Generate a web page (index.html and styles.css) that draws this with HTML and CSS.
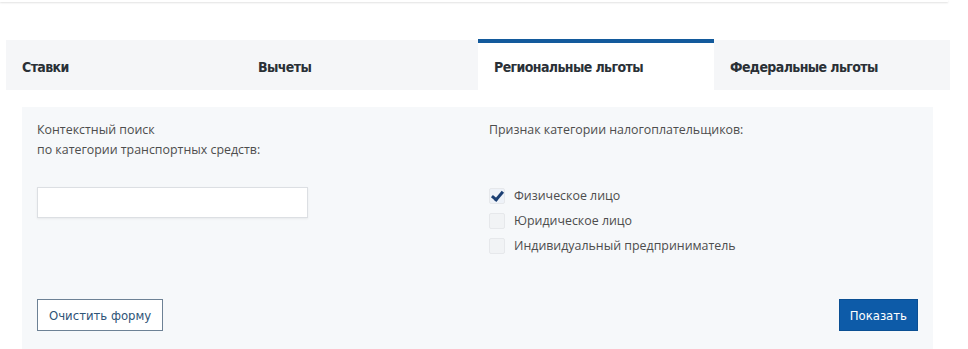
FILE: index.html
```html
<!DOCTYPE html>
<html>
<head>
    <title>Транспортный налог</title>
    <meta name="viewport" content="width=device-width, initial-scale=1.0">
    <link rel="stylesheet" href="styles.css">
</head>
<body>
<div class="top-strip"></div>
<main class="calc">
    <nav class="tabs">
        <a class="tab">Ставки</a>
        <a class="tab">Вычеты</a>
        <a class="tab tab-active">Региональные льготы</a>
        <a class="tab">Федеральные льготы</a>
    </nav>
    <section class="panel">
        <form class="filter">
            <div class="filter-col">
                <label class="filter-label" for="search">Контекстный поиск<br>по категории транспортных средств:</label>
                <input type="text" class="filter-input" id="search">
            </div>
            <div class="filter-col">
                <div class="filter-label">Признак категории налогоплательщиков:</div>
                <ul class="checks">
                    <li class="check check-on"><span class="check-box"></span>Физическое лицо</li>
                    <li class="check"><span class="check-box"></span>Юридическое лицо</li>
                    <li class="check"><span class="check-box"></span>Индивидуальный предприниматель</li>
                </ul>
            </div>
            <div class="filter-actions">
                <button type="button" class="btn btn-outline">Очистить форму</button>
                <button type="button" class="btn btn-primary">Показать</button>
            </div>
        </form>
    </section>
</main>
</body>
</html>
```

FILE: styles.css
```css
body {
    margin: 0;
    background-color: #fff;
    font-family: "Open Sans", sans-serif;
    font-size: 12.4px;
    color: #4d4d4d;
    overflow: hidden;
}

.top-strip {
    width: 948px;
    height: 2px;
    background: #fff;
    box-shadow: 0 1px 2px rgba(0,0,0,0.12);
}

.calc {
    width: 944px;
    margin: 38px 0 0 6px;
}

.tabs {
    display: grid;
    grid-template-columns: repeat(4, 1fr);
    height: 50px;
    background-color: #f5f6f8;
}

.tab {
    display: block;
    padding: 17px 16px 0;
    line-height: 20px;
    font-family: "DejaVu Sans Condensed", "DejaVu Sans", sans-serif;
    font-stretch: condensed;
    font-weight: bold;
    font-size: 14px;
    letter-spacing: -0.6px;
    color: #2a3036;
}

.tab-active {
    background-color: #fff;
    border-top: 4px solid #135a9c;
    margin-top: -1px;
    padding-top: 14px;
}

.panel {
    background-color: #fff;
    padding: 17px 17px 0 16px;
}

.filter {
    display: grid;
    grid-template-columns: 452px 1fr;
    padding: 13px 15px 19px;
    background-color: #f6f8fa;
}

.filter-label {
    display: block;
    line-height: 20px;
}

.filter-input {
    display: block;
    box-sizing: border-box;
    width: 271px;
    height: 31px;
    margin-top: 27px;
    border: 1px solid #dcdfe3;
    box-shadow: 0 1px 2px rgba(0,0,0,0.06);
    background: #fff;
}

.checks {
    list-style: none;
    margin: 43px 0 0 0;
    padding: 0;
}

.check {
    display: flex;
    align-items: center;
    height: 25px;
}

.check-box {
    width: 14px;
    height: 14px;
    margin-right: 9px;
    border: 1px solid #e6e8eb;
    border-radius: 2px;
    background: #f1f3f5;
    position: relative;
}

.check-on .check-box {
    background: #eef2f8;
}

.check-on .check-box::after {
    content: "";
    position: absolute;
    left: 4px;
    top: 0;
    width: 4px;
    height: 9px;
    border: solid #1b3f73;
    border-width: 0 3px 3px 0;
    transform: rotate(40deg);
}

.filter-actions {
    grid-column: 1 / 3;
    display: flex;
    justify-content: space-between;
    margin-top: 41px;
}

.btn {
    height: 32px;
    padding: 0 11px;
    font-family: "DejaVu Sans Condensed", "DejaVu Sans", sans-serif;
    font-stretch: condensed;
    font-size: 13px;
    border-radius: 0;
}

.btn-outline {
    background: #fff;
    border: 1px solid #6d8195;
    color: #2f5477;
}

.btn-primary {
    background: #0d5ba8;
    border: 1px solid #0b4f93;
    color: #fff;
    padding: 0 10px;
}
```
